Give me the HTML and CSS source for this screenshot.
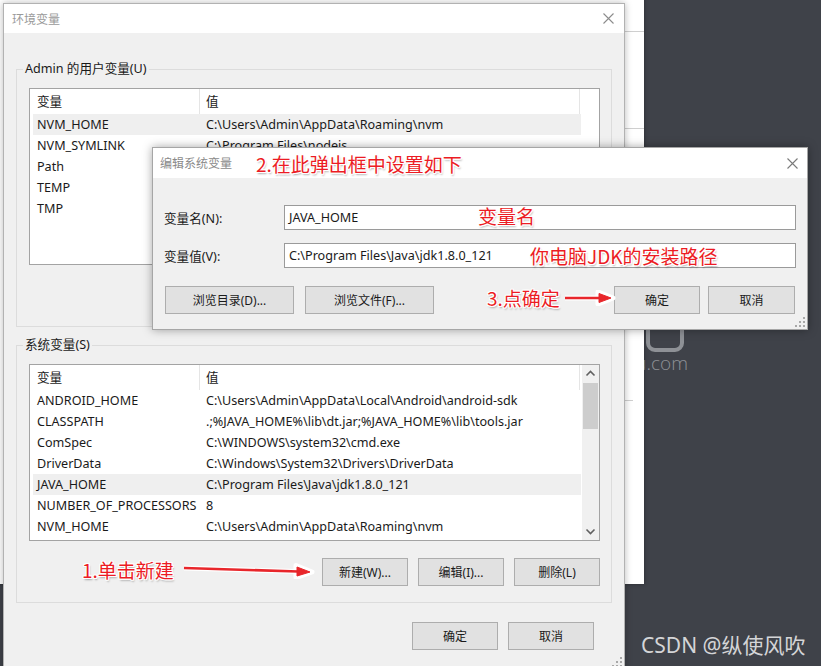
FILE: index.html
```html
<!DOCTYPE html>
<html lang="zh-CN">
<head>
<meta charset="utf-8">
<title>环境变量</title>
<link rel="stylesheet" href="styles.css">
</head>
<body>
<div class="desk">
  <div class="logo">
    <div class="logo-box"></div>
    <div class="logo-text">u.com</div>
  </div>

  <div class="backwin">
    <div class="bw-rule"></div>
    <div class="bw-rule second"></div>
    <div class="bw-rule short"></div>
  </div>

  <div class="dlg main-dlg">
    <div class="titlebar">
      <span class="title">环境变量</span>
      <svg class="close" width="11" height="11" viewBox="0 0 11 11"><path d="M0.5 0.5L10.5 10.5M10.5 0.5L0.5 10.5" stroke="#8c8c8c" stroke-width="1.1" fill="none"/></svg>
    </div>
    <div class="main-body">
      <section class="group">
        <div class="group-label">Admin 的用户变量(U)</div>
        <div class="list">
          <div class="list-main">
            <div class="lhead"><div class="h1">变量</div><div class="h2">值</div></div>
            <div class="row sel"><div class="c1">NVM_HOME</div><div class="c2">C:\Users\Admin\AppData\Roaming\nvm</div></div>
            <div class="row"><div class="c1">NVM_SYMLINK</div><div class="c2">C:\Program Files\nodejs</div></div>
            <div class="row"><div class="c1">Path</div><div class="c2"></div></div>
            <div class="row"><div class="c1">TEMP</div><div class="c2"></div></div>
            <div class="row"><div class="c1">TMP</div><div class="c2"></div></div>
          </div>
          <div class="sb-blank"></div>
        </div>
        <div class="btnrow covered">
          <div class="btn"></div>
          <div class="btn"></div>
          <div class="btn"></div>
        </div>
      </section>

      <section class="group sys">
        <div class="group-label">系统变量(S)</div>
        <div class="list">
          <div class="list-main">
            <div class="lhead"><div class="h1">变量</div><div class="h2">值</div></div>
            <div class="row"><div class="c1">ANDROID_HOME</div><div class="c2">C:\Users\Admin\AppData\Local\Android\android-sdk</div></div>
            <div class="row"><div class="c1">CLASSPATH</div><div class="c2">.;%JAVA_HOME%\lib\dt.jar;%JAVA_HOME%\lib\tools.jar</div></div>
            <div class="row"><div class="c1">ComSpec</div><div class="c2">C:\WINDOWS\system32\cmd.exe</div></div>
            <div class="row"><div class="c1">DriverData</div><div class="c2">C:\Windows\System32\Drivers\DriverData</div></div>
            <div class="row sel"><div class="c1">JAVA_HOME</div><div class="c2">C:\Program Files\Java\jdk1.8.0_121</div></div>
            <div class="row"><div class="c1">NUMBER_OF_PROCESSORS</div><div class="c2">8</div></div>
            <div class="row"><div class="c1">NVM_HOME</div><div class="c2">C:\Users\Admin\AppData\Roaming\nvm</div></div>
          </div>
          <div class="scrollbar">
            <svg class="sb-arrow" width="17" height="17" viewBox="0 0 17 17"><path d="M4.5 10.5L8.5 6.5L12.5 10.5" stroke="#606060" stroke-width="1.6" fill="none"/></svg>
            <div class="sb-thumb"></div>
            <div class="sb-track"></div>
            <svg class="sb-arrow" width="17" height="17" viewBox="0 0 17 17"><path d="M4.5 6.5L8.5 10.5L12.5 6.5" stroke="#606060" stroke-width="1.6" fill="none"/></svg>
          </div>
        </div>
        <div class="btnrow">
          <button class="btn">新建(W)...</button>
          <button class="btn">编辑(I)...</button>
          <button class="btn">删除(L)</button>
        </div>
      </section>

      <div class="footer">
        <button class="btn">确定</button>
        <button class="btn">取消</button>
      </div>
    </div>
    <svg class="grip" width="11" height="11" viewBox="0 0 11 11" fill="#a8a8a8"><rect x="9" y="1" width="2" height="2"/><rect x="5" y="5" width="2" height="2"/><rect x="9" y="5" width="2" height="2"/><rect x="1" y="9" width="2" height="2"/><rect x="5" y="9" width="2" height="2"/><rect x="9" y="9" width="2" height="2"/></svg>
  </div>

  <div class="dlg edit-dlg">
    <div class="titlebar edit-title">
      <span class="title">编辑系统变量</span>
      <svg class="close" width="11" height="11" viewBox="0 0 11 11"><path d="M0.5 0.5L10.5 10.5M10.5 0.5L0.5 10.5" stroke="#7a7a7a" stroke-width="1.1" fill="none"/></svg>
    </div>
    <div class="edit-body">
      <div class="field">
        <label class="flabel">变量名(N):</label>
        <div class="input">JAVA_HOME</div>
      </div>
      <div class="field second">
        <label class="flabel">变量值(V):</label>
        <div class="input">C:\Program Files\Java\jdk1.8.0_121</div>
      </div>
      <div class="edit-btns">
        <button class="btn wide">浏览目录(D)...</button>
        <button class="btn wide">浏览文件(F)...</button>
        <div class="spacer"></div>
        <div class="okcancel">
          <button class="btn">确定</button>
          <button class="btn cancel">取消</button>
        </div>
      </div>
    </div>
    <svg class="grip" width="11" height="11" viewBox="0 0 11 11" fill="#a8a8a8"><rect x="9" y="1" width="2" height="2"/><rect x="5" y="5" width="2" height="2"/><rect x="9" y="5" width="2" height="2"/><rect x="1" y="9" width="2" height="2"/><rect x="5" y="9" width="2" height="2"/><rect x="9" y="9" width="2" height="2"/></svg>
  </div>

  <div class="note n2">2.在此弹出框中设置如下</div>
  <div class="note nname">变量名</div>
  <div class="note npath">你电脑JDK的安装路径</div>
  <div class="note n3">3.点确定</div>
  <div class="note n1">1.单击新建</div>

  <svg class="arrow a1" width="140" height="16" viewBox="0 0 140 16">
    <g stroke="#ffffff" stroke-width="5" fill="#ffffff" stroke-linejoin="round">
      <path d="M2 5L116 8.5"/>
      <path d="M114 2.5L130 9L114 14.5Z"/>
    </g>
    <g stroke="#e8262b" stroke-width="2.6" fill="#e8262b" stroke-linejoin="round">
      <path d="M2 5L116 8.5"/>
      <path d="M115 4L128 9L115 13Z" stroke-width="1"/>
    </g>
  </svg>
  <svg class="arrow a3" width="54" height="16" viewBox="0 0 54 16">
    <g stroke="#ffffff" stroke-width="5" fill="#ffffff" stroke-linejoin="round">
      <path d="M2 8L36 8"/>
      <path d="M35 2L50 8L35 14Z"/>
    </g>
    <g stroke="#e8262b" stroke-width="2.6" fill="#e8262b" stroke-linejoin="round">
      <path d="M2 8L36 8"/>
      <path d="M36 3.5L48 8L36 12.5Z" stroke-width="1"/>
    </g>
  </svg>

  <div class="watermark">CSDN @纵使风吹</div>
</div>
</body>
</html>
```

FILE: styles.css
```css
* { box-sizing: border-box; }

html, body {
  margin: 0;
  padding: 0;
}

body {
  width: 821px;
  height: 666px;
  overflow: hidden;
  background: #3f4249;
  font-family: "Noto Sans", "Noto Sans CJK SC", sans-serif;
  font-size: 12.6px;
  color: #1a1a1a;
}

.desk {
  position: relative;
  width: 821px;
  height: 666px;
  overflow: hidden;
}

/* faded logo on the dark desktop */
.logo {
  position: absolute;
  left: 628px;
  top: 300px;
  width: 80px;
  display: flex;
  flex-direction: column;
  align-items: flex-end;
}
.logo-box {
  width: 38px;
  height: 52px;
  border: 4px solid #8e9196;
  border-radius: 9px;
  margin-right: 24px;
}
.logo-text {
  font-family: "Open Sans", sans-serif;
  font-weight: 300;
  font-size: 19px;
  line-height: 22px;
  color: #8e9196;
  margin-right: 20px;
}

/* window behind the dialogs */
.backwin {
  position: absolute;
  left: -20px;
  top: -20px;
  width: 664px;
  height: 604px;
  background: #ffffff;
  padding-top: 51px;
  box-shadow: 0 0 4px rgba(0, 0, 0, 0.35);
}
.bw-rule {
  height: 1px;
  background: #cfcfcf;
  margin-left: 600px;
}
.bw-rule.second { margin-top: 96px; }
.bw-rule.short { margin-top: 271px; margin-left: 645px; width: 8px; }

/* dialogs */
.dlg {
  position: absolute;
  background: #f0f0f0;
  border: 1px solid #b2b2b2;
  box-shadow: 0 0 7px rgba(0, 0, 0, 0.28);
}

.titlebar {
  display: flex;
  align-items: center;
  justify-content: space-between;
  background: #ffffff;
  color: #9a9a9a;
  font-size: 12px;
}

.main-dlg {
  left: 3px;
  top: 3px;
  width: 622px;
  height: 670px;
}
.main-dlg .titlebar {
  height: 29px;
  padding: 0 10px 0 8px;
}

.main-body {
  padding: 36px 12px 0 12px;
}

.group {
  display: flex;
  flex-direction: column;
  border: 1px solid #dcdcdc;
  padding: 0 11px 16px 12px;
}
.group.sys { margin-top: 18px; }

.group-label {
  align-self: flex-start;
  margin: -9px 0 0 -6px;
  padding: 0 2px;
  line-height: 16px;
  background: #f0f0f0;
  color: #1a1a1a;
}

.list {
  margin-top: 11px;
  height: 177px;
  border: 1px solid #a3a3a3;
  background: #ffffff;
  display: flex;
  overflow: hidden;
}
.list-main {
  flex: 1;
  padding-left: 3px;
  min-width: 0;
}
.sb-blank { width: 18px; }

.lhead {
  display: flex;
  height: 25px;
  align-items: center;
  margin-left: -3px;
}
.h1 {
  width: 170px;
  padding-left: 7px;
  border-right: 1px solid #e5e5e5;
  line-height: 25px;
}
.h2 {
  flex: 1;
  padding-left: 6px;
  border-right: 1px solid #e5e5e5;
  line-height: 25px;
  margin-right: 1px;
}

.row {
  display: flex;
  align-items: center;
  height: 21px;
  white-space: nowrap;
}
.row.sel { background: #efefef; }
.c1 {
  width: 173px;
  padding-left: 4px;
  flex-shrink: 0;
  overflow: hidden;
}
.c2 {
  flex: 1;
  overflow: hidden;
}

.scrollbar {
  width: 17px;
  margin-left: 1px;
  background: #f0f0f0;
  display: flex;
  flex-direction: column;
  align-items: center;
}
.sb-arrow { display: block; flex-shrink: 0; }
.sb-thumb {
  width: 15px;
  height: 46px;
  margin-top: 1px;
  background: #cdcdcd;
}
.sb-track { flex: 1; }

.btnrow {
  display: flex;
  justify-content: flex-end;
  gap: 10px;
  margin-top: 17px;
}

.btn {
  width: 86px;
  height: 28px;
  padding: 0;
  margin: 0;
  background: #e1e1e1;
  border: 1px solid #adadad;
  font-family: "Noto Sans", "Noto Sans CJK SC", sans-serif;
  font-size: 12px;
  color: #1a1a1a;
}
.btn.wide { width: 129px; }
.btn.cancel { width: 87px; }

.footer {
  display: flex;
  justify-content: flex-end;
  gap: 10px;
  margin: 19px 18px 0 0;
}

.grip {
  position: absolute;
  right: 2px;
  bottom: 2px;
}
.main-dlg .grip { bottom: 5px; }

/* edit dialog */
.edit-dlg {
  left: 152px;
  top: 147px;
  width: 656px;
  height: 183px;
  box-shadow: 0 0 9px rgba(0, 0, 0, 0.35);
  border-color: #a6a6a6;
}
.edit-dlg .titlebar {
  height: 30px;
  padding: 0 9px 0 7px;
  color: #8a8a8a;
}

.edit-body {
  padding: 27px 11px 0 11px;
}
.field {
  display: flex;
  align-items: center;
}
.field.second { margin-top: 13px; }
.flabel {
  width: 120px;
  flex-shrink: 0;
}
.input {
  flex: 1;
  height: 25px;
  line-height: 23px;
  padding-left: 4px;
  background: #ffffff;
  border: 1px solid #9a9a9a;
  white-space: nowrap;
}

.edit-btns {
  display: flex;
  gap: 11px;
  margin-top: 18px;
  padding-left: 1px;
}
.edit-btns .spacer { flex: 1; }
.okcancel {
  display: flex;
  gap: 8px;
  margin-right: 1px;
}

/* red annotations drawn over the screenshot */
.note {
  position: absolute;
  font-family: "Noto Sans CJK SC", "Noto Sans", sans-serif;
  font-size: 19px;
  line-height: 24px;
  color: #ec1c24;
  white-space: nowrap;
  text-shadow:
    1px 0 0 #fff, -1px 0 0 #fff, 0 1px 0 #fff, 0 -1px 0 #fff,
    1px 1px 0 #fff, -1px -1px 0 #fff, 1px -1px 0 #fff, -1px 1px 0 #fff,
    1px 2px 2px rgba(0, 0, 0, 0.35);
}
.n2 { left: 256px; top: 152px; }
.nname { left: 478px; top: 204px; }
.npath { left: 530px; top: 244px; }
.n3 { left: 487px; top: 286px; }
.n1 { left: 82px; top: 558px; }

.arrow { position: absolute; }
.a1 { left: 182px; top: 563px; }
.a3 { left: 563px; top: 290px; }

.watermark {
  position: absolute;
  left: 641px;
  top: 631px;
  font-family: "Noto Sans", "Noto Sans CJK SC", sans-serif;
  font-size: 21px;
  line-height: 28px;
  color: #d4d5d7;
  white-space: nowrap;
}
```
